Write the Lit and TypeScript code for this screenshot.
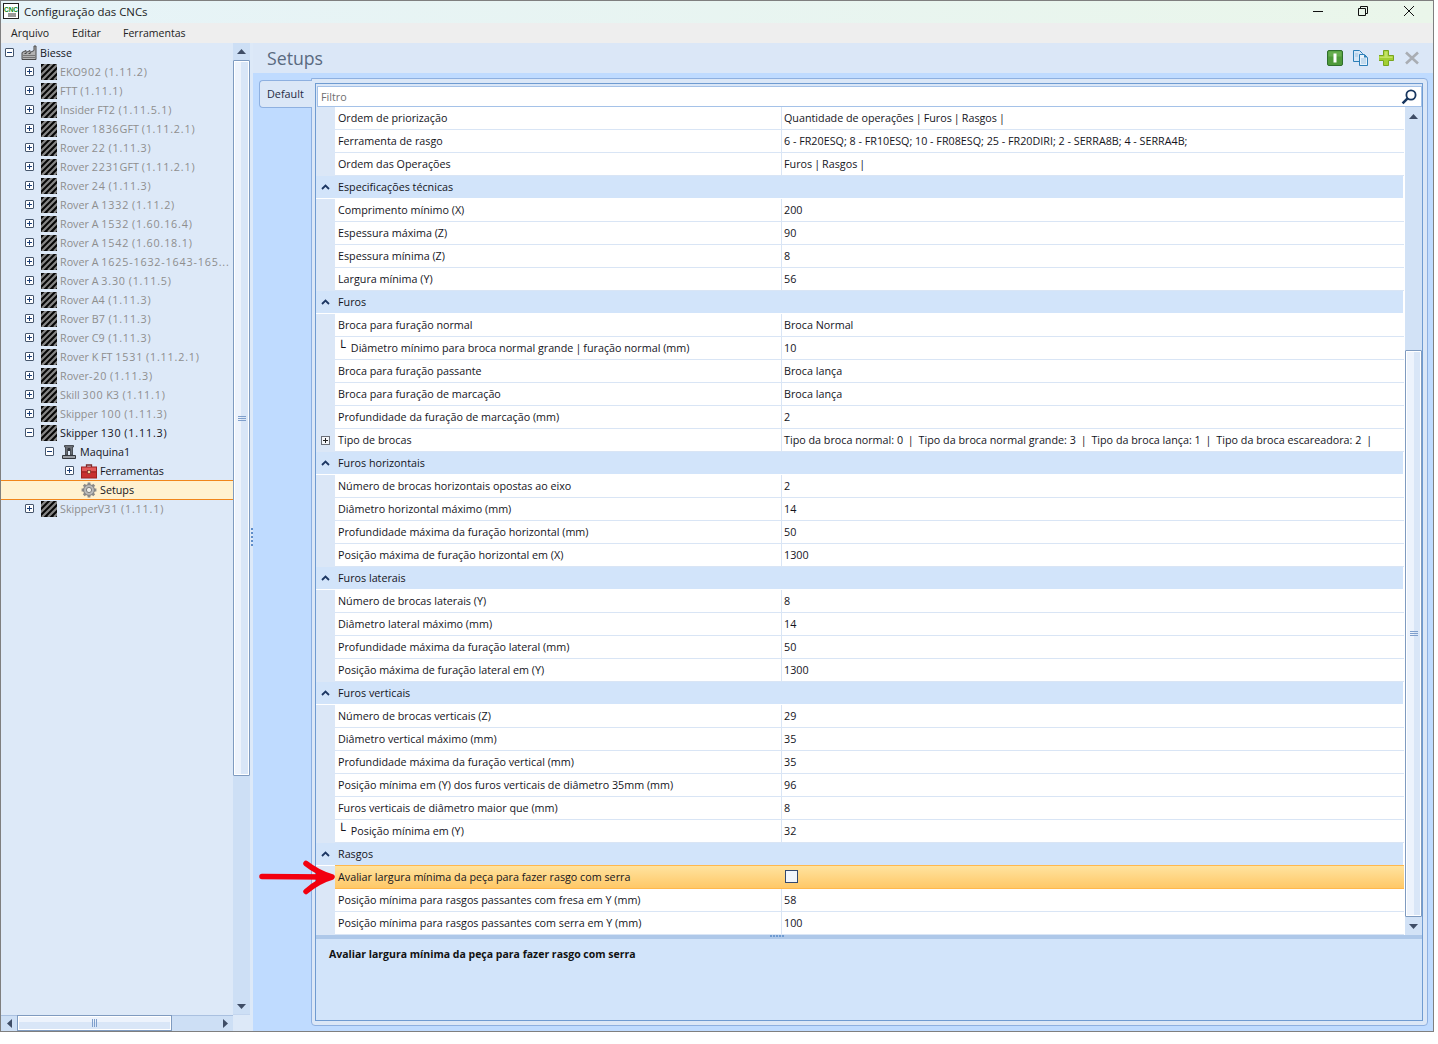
import { LitElement, html, css, svg } from "lit";
import { customElement } from "lit/decorators.js";

type Row =
  | { g: string }
  | { n: string; v?: string; plus?: boolean; sel?: boolean; check?: boolean; sub?: boolean };

const ROWS: Row[] = [
  { n: "Ordem de priorização", v: "Quantidade de operações | Furos | Rasgos |" },
  { n: "Ferramenta de rasgo", v: "6 - FR20ESQ; 8 - FR10ESQ; 10 - FR08ESQ; 25 - FR20DIRI; 2 - SERRA8B; 4 - SERRA4B;" },
  { n: "Ordem das Operações", v: "Furos | Rasgos |" },
  { g: "Especificações técnicas" },
  { n: "Comprimento mínimo (X)", v: "200" },
  { n: "Espessura máxima (Z)", v: "90" },
  { n: "Espessura mínima (Z)", v: "8" },
  { n: "Largura mínima (Y)", v: "56" },
  { g: "Furos" },
  { n: "Broca para furação normal", v: "Broca Normal" },
  { n: "Diâmetro mínimo para broca normal grande | furação normal (mm)", v: "10", sub: true },
  { n: "Broca para furação passante", v: "Broca lança" },
  { n: "Broca para furação de marcação", v: "Broca lança" },
  { n: "Profundidade da furação de marcação (mm)", v: "2" },
  { n: "Tipo de brocas", v: "Tipo da broca normal: 0  |  Tipo da broca normal grande: 3  |  Tipo da broca lança: 1  |  Tipo da broca escareadora: 2  |", plus: true },
  { g: "Furos horizontais" },
  { n: "Número de brocas horizontais opostas ao eixo", v: "2" },
  { n: "Diâmetro horizontal máximo (mm)", v: "14" },
  { n: "Profundidade máxima da furação horizontal (mm)", v: "50" },
  { n: "Posição máxima de furação horizontal em (X)", v: "1300" },
  { g: "Furos laterais" },
  { n: "Número de brocas laterais (Y)", v: "8" },
  { n: "Diâmetro lateral máximo (mm)", v: "14" },
  { n: "Profundidade máxima da furação lateral (mm)", v: "50" },
  { n: "Posição máxima de furação lateral em (Y)", v: "1300" },
  { g: "Furos verticais" },
  { n: "Número de brocas verticais (Z)", v: "29" },
  { n: "Diâmetro vertical máximo (mm)", v: "35" },
  { n: "Profundidade máxima da furação vertical (mm)", v: "35" },
  { n: "Posição mínima em (Y) dos furos verticais de diâmetro 35mm (mm)", v: "96" },
  { n: "Furos verticais de diâmetro maior que (mm)", v: "8" },
  { n: "Posição mínima em (Y)", v: "32", sub: true },
  { g: "Rasgos" },
  { n: "Avaliar largura mínima da peça para fazer rasgo com serra", sel: true, check: true },
  { n: "Posição mínima para rasgos passantes com fresa em Y (mm)", v: "58" },
  { n: "Posição mínima para rasgos passantes com serra em Y (mm)", v: "100" },
];

type Node = { t: string; l: number; box?: "+" | "-"; icon: string; dim?: boolean; sel?: boolean };
const mach = (t: string): Node => ({ t, l: 1, box: "+", icon: "hatch", dim: true });
const TREE: Node[] = [
  { t: "Biesse", l: 0, box: "-", icon: "factory" },
  ...[
    "EKO902 (1.11.2)", "FTT (1.11.1)", "Insider FT2 (1.11.5.1)", "Rover 1836GFT (1.11.2.1)", "Rover 22 (1.11.3)",
    "Rover 2231GFT (1.11.2.1)", "Rover 24 (1.11.3)", "Rover A 1332 (1.11.2)", "Rover A 1532 (1.60.16.4)",
    "Rover A 1542 (1.60.18.1)", "Rover A 1625-1632-1643-165...", "Rover A 3.30 (1.11.5)", "Rover A4 (1.11.3)",
    "Rover B7 (1.11.3)", "Rover C9 (1.11.3)", "Rover K FT 1531 (1.11.2.1)", "Rover-20 (1.11.3)",
    "Skill 300 K3 (1.11.1)", "Skipper 100 (1.11.3)",
  ].map(mach),
  { t: "Skipper 130 (1.11.3)", l: 1, box: "-", icon: "hatch" },
  { t: "Maquina1", l: 2, box: "-", icon: "machine" },
  { t: "Ferramentas", l: 3, box: "+", icon: "toolbox" },
  { t: "Setups", l: 3, icon: "gear", sel: true },
  mach("SkipperV31 (1.11.1)"),
];

const hatch = svg`<svg class="ico" viewBox="0 0 16 16"><rect width="16" height="16" fill="#060606"/><path d="M-2 7 7-2M-2 13 13-2M1 16 17 0M7 16 17 6M13 16 17 12" stroke="#868686" stroke-width="2.2"/></svg>`;
const factory = svg`<svg class="ico" viewBox="0 0 16 16"><path d="M1 7.5l4-2v2l4-2v2l4-2V1h2v13.5H1z" fill="#b3b3b3" stroke="#4a4a4a"/><path d="M2 10.5h12M2 12.5h12" stroke="#6e6e6e" stroke-width=".9"/><path d="M3.5 8.5h2M7.5 8.5h2" stroke="#444"/></svg>`;
const machine = svg`<svg class="ico" viewBox="0 0 16 16"><path d="M3.5 1.5h9v1.5h-1v8h-2V5h-3v6h-2V3h-1z" fill="#6b6f75" stroke="#33373d" stroke-width=".8"/><path d="M1.5 11.5h13v3h-13z" fill="#9a9ea4" stroke="#33373d"/><path d="M7 4h2v3H7z" fill="#33373d"/></svg>`;
const toolbox = svg`<svg class="ico" viewBox="0 0 16 16"><path d="M5.5 4V2h5v2" fill="none" stroke="#7a2a2a" stroke-width="1.3"/><rect x=".5" y="4" width="15" height="5" fill="#e25a5a" stroke="#9c2020"/><rect x=".5" y="9" width="15" height="6" fill="#c83030" stroke="#9c2020"/><rect x="6.5" y="7.5" width="3" height="3" fill="#f4d8a0" stroke="#7a2a2a" stroke-width=".7"/></svg>`;
const gear = svg`<svg class="ico" viewBox="0 0 16 16"><path d="M8 .6v14.8M.6 8h14.8M2.8 2.8l10.4 10.4M13.2 2.8 2.8 13.2" stroke="#8a8a8a" stroke-width="2.8"/><circle cx="8" cy="8" r="5.4" fill="#b9b9b9" stroke="#808080"/><circle cx="8" cy="8" r="2.6" fill="#f0f0ec" stroke="#7e7e7e"/></svg>`;
const ICONS: Record<string, unknown> = { hatch, factory, machine, toolbox, gear };

const up = svg`<svg class="arr" width="9" height="5" viewBox="0 0 9 5"><path d="M4.5 0 9 5H0z"/></svg>`;
const down = svg`<svg class="arr" width="9" height="5" viewBox="0 0 9 5"><path d="M0 0h9L4.5 5z"/></svg>`;
const left = svg`<svg class="arr" width="5" height="9" viewBox="0 0 5 9"><path d="M5 0v9L0 4.5z"/></svg>`;
const right = svg`<svg class="arr" width="5" height="9" viewBox="0 0 5 9"><path d="M0 0l5 4.5L0 9z"/></svg>`;

/* The reference's digits and punctuation run wider than the letters, and its pipes narrower. */
const spaced = (t: string) =>
  t.split(/([0-9.()\-]+)/).map((p, i) => (i % 2 ? html`<span class="num">${p}</span>` : p));
const piped = (t: string) =>
  t.split("|").flatMap((p, i) => (i ? [html`<span class="pipe">|</span>`, p] : [p]));

@customElement("app-root")
export class AppRoot extends LitElement {
  static styles = css`
    :host { display: block; position: relative; width: 1438px; height: 1044px; background: #fff; overflow: hidden;
      font-family: "Open Sans", "Noto Sans", sans-serif; font-size: 10.75px; color: #14141c; }
    * { box-sizing: border-box; }
    .win { width: 1434px; height: 1032px; border: 1px solid #7f7f7f; display: flex; flex-direction: column; background: #bfdbff; }
    .title { height: 22px; display: flex; align-items: center; background: linear-gradient(90deg, #e6f3f8, #eaf6ea); padding-left: 2px; font-size: 11.4px; color: #222; position: relative; }
    .title .t { margin-left: 5px; margin-top: -2px; }
    .appicon { width: 16px; height: 16px; display: block; margin-top: -2px; }
    .ctl { margin-left: auto; margin-right: 1px; display: flex; align-items: center; margin-top: -3px; }
    .ctl svg { display: block; }
    .menu { height: 20px; background: #eeeeee; display: flex; align-items: center; font-size: 10.55px; color: #222; padding: 0 0 1px 10px; }
    .menu span:nth-child(1) { width: 61px; }
    .menu span:nth-child(2) { width: 51px; }
    .body { flex: 1; display: flex; min-height: 0; }

    .side { width: 249px; display: grid; grid-template-columns: 232px 17px; grid-template-rows: 972px 16px; background: #dde9f8; }
    .tree { overflow: hidden; background: #dde9f8; }
    .node { height: 19px; display: flex; align-items: center; white-space: pre; color: #14141c; }
    .node.dim { color: #8e8e8e; }
    .node.sel { background: #fff1cf; border-top: 1px solid #f0851a; border-bottom: 1px solid #f0851a; height: 20px; margin-bottom: -1px; position: relative; top: -0.5px; }
    .num { letter-spacing: 0.82px; }
    .pipe { margin: 0 -0.75px; }
    .box { width: 9px; height: 9px; flex: none; border: 1px solid #46566c; background: #fff; display: block; margin-right: 7px; border-radius: 1px; position: relative; }
    .box.none { visibility: hidden; }
    .box i { position: absolute; left: 1px; top: 3px; width: 5px; height: 1px; background: #1c3f78; }
    .box.plus b { position: absolute; left: 3px; top: 1px; width: 1px; height: 5px; background: #1c3f78; }
    .ico { width: 16px; height: 16px; flex: none; display: block; margin-right: 3px; }

    .vs, .gs { display: flex; flex-direction: column; background: #cddff5; }
    .btn { display: flex; align-items: center; justify-content: center; flex: none; }
    .arr { display: block; fill: #3f4d66; }
    .vthumb { flex: none; border: 1px solid #7f9bc0; border-radius: 1px; background: linear-gradient(90deg, #edf3fc 0 50%, #d9e6f7 50% 100%); box-shadow: inset 0 0 0 1px #fff; display: flex; align-items: center; justify-content: center; }
    .grip { width: 8px; height: 5px; border-top: 1px solid #7f9fcc; border-bottom: 1px solid #7f9fcc; position: relative; }
    .grip::after { content: ""; position: absolute; left: 0; right: 0; top: 1px; height: 1px; background: #7f9fcc; }
    .vs .t1 { height: 17px; }
    .vs .thumb1 { height: 716px; }
    .vs .fill { flex: 1; }
    .vs .b1 { height: 17px; border-bottom: 1px solid #c4d6ef; }
    .hs { display: flex; align-items: stretch; background: #cddff5; border-top: 1px solid #a9c0e0; }
    .hs .btn { width: 16px; }
    .hthumb { width: 155px; margin-top: -1px; border: 1px solid #7f9bc0; background: linear-gradient(180deg, #edf3fc 0 45%, #d9e6f7 45% 100%); box-shadow: inset 0 0 0 1px #fff; display: flex; align-items: center; justify-content: center; }
    .hgrip { width: 5px; height: 8px; border-left: 1px solid #7f9fcc; border-right: 1px solid #7f9fcc; position: relative; }
    .hgrip::after { content: ""; position: absolute; top: 0; bottom: 0; left: 1px; width: 1px; background: #7f9fcc; }
    .hs .fill { flex: 1; }
    .corner { background: #dde9f8; }

    .split { width: 3px; background: #dde9f8; display: flex; flex-direction: column; align-items: center; justify-content: center; }
    .split .dots { display: flex; flex-direction: column; gap: 2px; }
    .split i { width: 2px; height: 2px; background: #5f8cc8; display: block; }

    .main { flex: 1; min-width: 0; display: flex; flex-direction: column; }
    .head { height: 30px; background: #dbe7f7; display: flex; align-items: center; padding: 0 12px 0 14px; flex: none; }
    .head .h { font-size: 17.7px; color: #596a80; margin-top: -1px; }
    .tools { margin-left: auto; display: flex; gap: 10px; }
    .tools svg { display: block; }
    .area { flex: 1; min-height: 0; display: flex; padding: 5px 5px 5px 6px; }
    .tab { width: 53px; height: 28px; margin-top: 2px; margin-right: -1px; background: #dbe7f7; border: 1px solid #8eb0e0; border-right: none; border-radius: 4px 0 0 4px; display: flex; align-items: center; padding: 0 0 2px 7px; color: #1f2a44; z-index: 1; position: relative; font-size: 10.8px; }
    .panel { flex: 1; min-width: 0; background: #dbe7f7; border: 1px solid #8eb0e0; border-radius: 0 4px 4px 4px; padding: 4px 4px 4px 3px; display: flex; }
    .frame { flex: 1; min-width: 0; border: 1px solid #6f9bd1; display: flex; flex-direction: column; }
    .filter { height: 21px; margin: 2px 0 0 1px; background: #fff; border: 1px solid #a5c2e8; display: flex; align-items: center; padding-left: 3px; color: #6f6f6f; justify-content: space-between; flex: none; position: relative; z-index: 1; }
    .filter svg { margin-right: 4px; display: block; }
    .gridwrap { display: flex; height: 828px; flex: none; }
    .rows { width: 1089px; background: #fff; }
    .row { height: 23px; display: grid; grid-template-columns: 19px 447px 1fr; width: 1088px; white-space: pre; }
    .gut { background: #dbe7f7; display: flex; align-items: center; justify-content: center; }
    .cell { border-bottom: 1px solid #d9e5f5; display: flex; align-items: center; padding-left: 3px; overflow: hidden; }
    .cell.nm { border-right: 1px solid #d9e5f5; padding-bottom: 1px; }
    .cell.vl { padding-left: 2px; padding-bottom: 1px; }
    .row.sel .cell { background: linear-gradient(180deg, #ffe39f, #ffc867); border-bottom: 1px solid #ffb84d; border-right: none; box-shadow: 0 -1px 0 #ffb84d; }
    .row.group { display: flex; align-items: center; background: #d2e4fa; border-bottom: 1px solid #fff; border-right: 1px solid #fff; padding-bottom: 1px; }
    .row.group .gut { background: none; width: 19px; flex: none; }
    .row.group .gn { padding-left: 3px; }
    .sub { margin-right: 5px; font-size: 13px; line-height: 1; font-family: "DejaVu Sans", sans-serif; }
    .pbox { width: 9px; height: 9px; border: 1px solid #6a6f78; background: #f4f6fa; position: relative; }
    .pbox::before { content: ""; position: absolute; left: 1px; top: 3px; width: 5px; height: 1px; background: #222; }
    .pbox::after { content: ""; position: absolute; left: 3px; top: 1px; width: 1px; height: 5px; background: #222; }
    .chk { width: 13px; height: 13px; border: 1px solid #33486e; background: #f2f6fc; margin-left: 1px; }
    .gs { width: 17px; background: #d2e2f6; }
    .gs .t1 { height: 18px; margin-top: 0; }
    .gs .gap { height: 225px; }
    .gs .thumb2 { height: 567px; }
    .gs .fill { flex: 1; }
    .desc { flex: 1; background: #d2e4fa; border-top: 4px solid #aec8e9; padding: 8px 0 0 13px; font-weight: 700; font-size: 10.5px; position: relative; color: #111; }
    .sdots { position: absolute; left: 454px; top: -4px; display: flex; gap: 1px; }
    .sdots i { width: 2px; height: 2px; background: #6f9bd1; display: block; }
    .red { position: absolute; left: 255px; top: 855px; display: block; pointer-events: none; }
  `;

  private renderRow(r: Row) {
    if ("g" in r) {
      return html`<div class="row group">
        <div class="gut"><svg width="9" height="6" viewBox="0 0 9 6"><path d="M1 5l3.5-3.5L8 5" fill="none" stroke="#1d3763" stroke-width="1.8"/></svg></div>
        <div class="gn">${r.g}</div>
      </div>`;
    }
    return html`<div class="row ${r.sel ? "sel" : ""}">
      <div class="gut">${r.plus ? html`<span class="pbox"></span>` : ""}</div>
      <div class="cell nm">${r.sub ? html`<span class="sub">└</span>` : ""}<span>${piped(r.n)}</span></div>
      <div class="cell vl">${r.check ? html`<span class="chk"></span>` : html`<span>${piped(r.v ?? "")}</span>`}</div>
    </div>`;
  }

  private renderNode(n: Node) {
    const pad = 4 + 20 * n.l;
    return html`<div class="node ${n.dim ? "dim" : ""} ${n.sel ? "sel" : ""}" style="padding-left:${pad}px">
      <span class="box ${n.box ? (n.box === "+" ? "plus" : "") : "none"}"><i></i><b></b></span>
      ${ICONS[n.icon]}
      <span>${spaced(n.t)}</span>
    </div>`;
  }

  render() {
    return html`
      <div class="win">
        <div class="title">
          <svg class="appicon" viewBox="0 0 16 16"><rect x=".5" y=".5" width="15" height="15" fill="#fff" stroke="#222"/><text x="8" y="8.5" text-anchor="middle" font-family="Liberation Sans, sans-serif" font-size="6.5" font-weight="700" fill="#0a8a1a">CNC</text><rect x="5" y="10" width="8" height="4" fill="#999"/></svg>
          <span class="t">Configuração das CNCs</span>
          <div class="ctl">
            <svg width="46" height="16" viewBox="0 0 46 16"><path d="M19 8.5h10" stroke="#111"/></svg>
            <svg width="46" height="16" viewBox="0 0 46 16"><path d="M18.5 5.5h7v7h-7zM20.5 5.5v-2h7v7h-2" fill="none" stroke="#111"/></svg>
            <svg width="46" height="16" viewBox="0 0 46 16"><path d="M18 3l10 10M28 3 18 13" stroke="#111" fill="none"/></svg>
          </div>
        </div>
        <div class="menu"><span>Arquivo</span><span>Editar</span><span>Ferramentas</span></div>
        <div class="body">
          <div class="side">
            <div class="tree">${TREE.map((n) => this.renderNode(n))}</div>
            <div class="vs">
              <div class="btn t1">${up}</div>
              <div class="vthumb thumb1"><span class="grip"></span></div>
              <div class="fill"></div>
              <div class="btn b1">${down}</div>
            </div>
            <div class="hs">
              <div class="btn">${left}</div>
              <div class="hthumb"><span class="hgrip"></span></div>
              <div class="fill"></div>
              <div class="btn">${right}</div>
            </div>
            <div class="corner"></div>
          </div>
          <div class="split"><div class="dots"><i></i><i></i><i></i><i></i><i></i></div></div>
          <div class="main">
            <div class="head">
              <span class="h">Setups</span>
              <div class="tools">
                <svg width="16" height="16" viewBox="0 0 16 16"><rect x=".5" y=".5" width="15" height="15" rx="1.5" fill="#4f9a3a" stroke="#2f6f2c"/><rect x="1.5" y="1.5" width="13" height="5" fill="#66ad4e"/><rect x="6.5" y="3.5" width="3" height="9" fill="#fff"/></svg>
                <svg width="16" height="16" viewBox="0 0 16 16"><path d="M.5.5h6l3 3v8h-9z" fill="#d6e6f6" stroke="#2d7fb8"/><path d="M6.5 4.5h5l3 3v8h-8z" fill="#e8f2fb" stroke="#2d7fb8"/><path d="M2 4h3M2 6h3M8 9h5M8 11h5M8 13h5" stroke="#9fc3e0"/><path d="M11 4.5l3.5 3H11z" fill="#2d7fb8"/></svg>
                <svg width="16" height="16" viewBox="1 0 16 16"><path d="M5.5.5h5v5h5v5h-5v5h-5v-5h-5v-5h5z" fill="#a2cf33" stroke="#78a51f"/><path d="M6.5 1.5h3v5h5v1.5h-13V6.5h5z" fill="#c3e265"/></svg>
                <svg width="16" height="16" viewBox="1 0 16 16"><path d="M2 2.5l12 11M14 2.5l-12 11" stroke="#a9adb3" stroke-width="2.6"/></svg>
              </div>
            </div>
            <div class="area">
              <div class="tab">Default</div>
              <div class="panel">
                <div class="frame">
                  <div class="filter">
                    <span>Filtro</span>
                    <svg width="16" height="16" viewBox="0 0 16 16"><circle cx="10" cy="6" r="4.6" fill="#fff" stroke="#17365f" stroke-width="1.8"/><path d="M6.6 9.4 1.6 14.4" stroke="#17365f" stroke-width="2.6"/></svg>
                  </div>
                  <div class="gridwrap">
                    <div class="rows">${ROWS.map((r) => this.renderRow(r))}</div>
                    <div class="gs">
                      <div class="btn t1">${up}</div>
                      <div class="gap"></div>
                      <div class="vthumb thumb2"><span class="grip"></span></div>
                      <div class="btn fill">${down}</div>
                    </div>
                  </div>
                  <div class="desc">
                    <div class="sdots"><i></i><i></i><i></i><i></i><i></i></div>
                    Avaliar largura mínima da peça para fazer rasgo com serra
                  </div>
                </div>
              </div>
            </div>
          </div>
        </div>
      </div>
      <svg class="red" width="85" height="45" viewBox="255 855 85 45"><path d="M262 876.5 326 877" stroke="#f2000f" stroke-width="5.5" stroke-linecap="round" fill="none"/><path d="M306 863.5 Q318 873 332 877 Q318 881 306 891.5" stroke="#f2000f" stroke-width="5.5" stroke-linecap="round" stroke-linejoin="round" fill="none"/><path d="M316 870 L335 877 L316 884z" fill="#f2000f"/></svg>
    `;
  }
}
